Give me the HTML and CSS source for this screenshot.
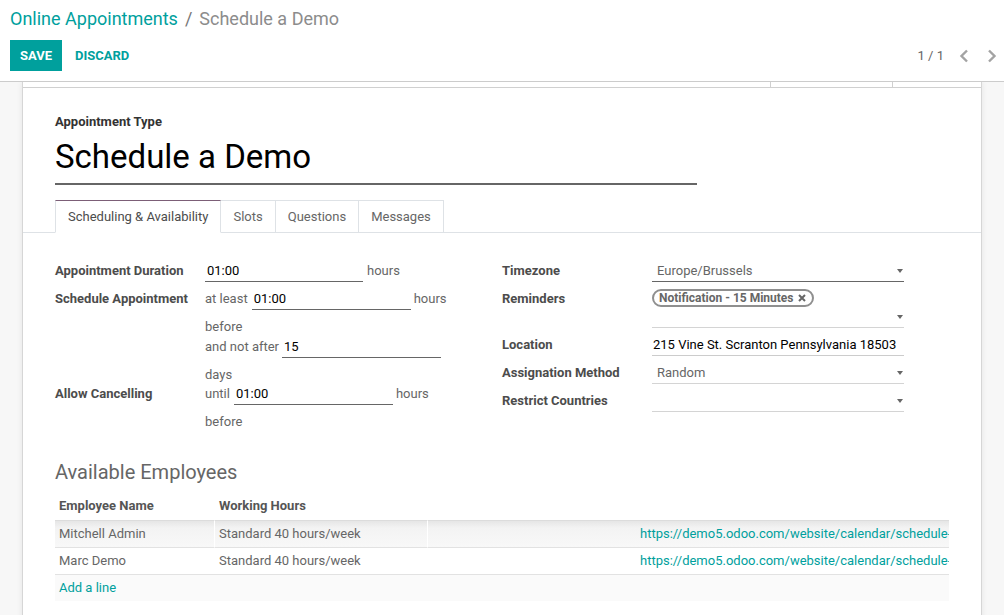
FILE: index.html
```html
<!DOCTYPE html>
<html lang="en">
<head>
<meta charset="utf-8">
<title>Schedule a Demo</title>
<link rel="stylesheet" href="styles.css">
</head>
<body>
<header class="cp">
  <div class="breadcrumb">
    <a class="bc-link">Online Appointments</a><span class="bc-sep">/</span><span class="bc-active">Schedule a Demo</span>
  </div>
  <div class="cp-bottom">
    <div class="cp-buttons">
      <button class="btn btn-save">Save</button>
      <button class="btn btn-discard">Discard</button>
    </div>
    <div class="pager">
      <span class="pager-value">1 / 1</span>
      <button class="pager-btn" aria-label="Previous">
        <svg width="10" height="14" viewBox="0 0 10 14"><path d="M8 1.5 L2.5 7 L8 12.5" fill="none" stroke="#a3a3a3" stroke-width="2.4"/></svg>
      </button>
      <button class="pager-btn" aria-label="Next">
        <svg width="10" height="14" viewBox="0 0 10 14"><path d="M2 1.5 L7.5 7 L2 12.5" fill="none" stroke="#a3a3a3" stroke-width="2.4"/></svg>
      </button>
    </div>
  </div>
</header>

<main class="content">
  <div class="sheet">
    <div class="button-box">
      <div class="bb-btn"></div>
      <div class="bb-btn bb-last"></div>
    </div>
    <div class="sheet-body">
      <div class="title">
        <div class="title-label">Appointment Type</div>
        <div class="title-input">Schedule a Demo</div>
      </div>

      <div class="notebook">
        <ul class="tabs">
          <li class="tab active">Scheduling &amp; Availability</li>
          <li class="tab">Slots</li>
          <li class="tab">Questions</li>
          <li class="tab">Messages</li>
        </ul>

        <div class="tab-pane">
          <div class="groups">
            <div class="group">
              <div class="lbl">Appointment Duration</div>
              <div class="val">
                <div class="line"><span class="inp dark w158">01:00</span><span class="txt ml4">hours</span></div>
              </div>

              <div class="lbl">Schedule Appointment</div>
              <div class="val">
                <div class="line"><span class="txt">at least</span><span class="inp dark ml4 w159">01:00</span><span class="txt ml3">hours</span></div>
                <div class="tline">before</div>
                <div class="line"><span class="txt">and not after</span><span class="inp dark ml3 w159">15</span></div>
                <div class="tline">days</div>
              </div>

              <div class="lbl">Allow Cancelling</div>
              <div class="val">
                <div class="line"><span class="txt">until</span><span class="inp dark ml4 w159">01:00</span><span class="txt ml3">hours</span></div>
                <div class="tline">before</div>
              </div>
            </div>

            <div class="group">
              <div class="lbl">Timezone</div>
              <div class="val">
                <div class="line"><span class="sel dark">Europe/Brussels<i class="caret"></i></span></div>
              </div>

              <div class="lbl">Reminders</div>
              <div class="val">
                <div class="tag-line">
                  <span class="tag">Notification - 15 Minutes
                    <svg class="tag-x" width="8" height="8" viewBox="0 0 8 8"><path d="M1 1 L7 7 M7 1 L1 7" stroke="#666" stroke-width="2" fill="none"/></svg>
                  </span>
                </div>
                <div class="line"><span class="sel"><i class="caret"></i></span></div>
              </div>

              <div class="lbl">Location</div>
              <div class="val">
                <div class="line"><span class="inp light w252">215 Vine St. Scranton Pennsylvania 18503</span></div>
              </div>

              <div class="lbl">Assignation Method</div>
              <div class="val">
                <div class="line"><span class="sel">Random<i class="caret"></i></span></div>
              </div>

              <div class="lbl">Restrict Countries</div>
              <div class="val">
                <div class="line"><span class="sel"><i class="caret"></i></span></div>
              </div>
            </div>
          </div>

          <h3 class="sep-title">Available Employees</h3>

          <table class="list">
            <colgroup>
              <col class="c-name">
              <col class="c-hours">
              <col class="c-blank">
              <col class="c-url">
            </colgroup>
            <thead>
              <tr>
                <th class="sep">Employee Name</th>
                <th class="sep">Working Hours</th>
                <th></th>
                <th></th>
              </tr>
            </thead>
            <tbody>
              <tr class="first">
                <td class="sep">Mitchell Admin</td>
                <td class="sep">Standard 40 hours/week</td>
                <td></td>
                <td class="url">https://demo5.odoo.com/website/calendar/schedule-a-demo-1?employee_id=1</td>
              </tr>
              <tr>
                <td>Marc Demo</td>
                <td>Standard 40 hours/week</td>
                <td></td>
                <td class="url">https://demo5.odoo.com/website/calendar/schedule-a-demo-1?employee_id=7</td>
              </tr>
              <tr class="add-row">
                <td colspan="4"><a class="add-line">Add a line</a></td>
              </tr>
            </tbody>
          </table>
        </div>
      </div>
    </div>
  </div>
</main>
</body>
</html>
```

FILE: styles.css
```css
* {
  box-sizing: border-box;
}

html,
body {
  margin: 0;
  height: 100%;
}

body {
  font-family: Roboto, "Noto Sans", "Liberation Sans", sans-serif;
  font-size: 13px;
  color: #4c4c4c;
  background: #f7f7f7;
  overflow: hidden;
}

/* ---------- control panel ---------- */
.cp {
  background: #fff;
  border-bottom: 1px solid #cccccc;
  padding: 8px 0 10px 10px;
  height: 82px;
}

.breadcrumb {
  font-size: 18px;
  line-height: 22px;
  height: 22px;
  white-space: nowrap;
}

.bc-link {
  color: #00a09d;
}

.bc-sep {
  color: #777;
  margin: 0 7px;
}

.bc-active {
  color: #8c8c8c;
}

.cp-bottom {
  display: flex;
  justify-content: space-between;
  align-items: center;
  margin-top: 10px;
  height: 31px;
}

.cp-buttons {
  display: flex;
}

.btn {
  border: 0;
  font-family: inherit;
  font-weight: bold;
  font-size: 13px;
  height: 31px;
  padding: 0 10px;
  text-transform: uppercase;
  cursor: pointer;
}

.btn-save {
  background: #00a09d;
  color: #fff;
}

.btn-discard {
  background: none;
  color: #00a09d;
  margin-left: 3px;
}

.pager {
  display: flex;
  align-items: center;
  margin-right: -2px;
}

.pager-value {
  color: #666;
  margin-right: 6px;
}

.pager-btn {
  width: 28px;
  height: 31px;
  display: flex;
  align-items: center;
  justify-content: center;
  background: none;
  border: 0;
  padding: 0;
}

/* ---------- content / sheet ---------- */
.content {
  height: calc(100% - 82px);
  padding: 0 22px;
  overflow: hidden;
}

.sheet {
  background: #fff;
  border-left: 1px solid #d6d6d6;
  border-right: 1px solid #d6d6d6;
  min-height: 110%;
  box-shadow: 0 0 6px rgba(0, 0, 0, 0.08);
}

.button-box {
  display: flex;
  justify-content: flex-end;
  height: 6px;
  border-bottom: 1px solid #d0d0d0;
}

.bb-btn {
  border-left: 1px solid #d0d0d0;
  width: 122px;
}

.bb-btn.bb-last {
  width: 89px;
}

.sheet-body {
  padding: 25px 32px 0;
}

.title-label {
  font-weight: bold;
  line-height: 18px;
  color: #333;
}

.title-input {
  margin-top: 3px;
  width: 642px;
  font-size: 33px;
  line-height: 40px;
  padding: 3px 0 6px;
  border-bottom: 2px solid #666;
  color: #000;
}

/* ---------- notebook ---------- */
.tabs {
  display: flex;
  list-style: none;
  margin: 15px -32px 0;
  padding: 0 0 0 32px;
  border-bottom: 1px solid #dee2e6;
}

.tab {
  border: 1px solid #dee2e6;
  padding: 7px 12px 6px;
  line-height: 18px;
  margin-right: -1px;
  margin-bottom: -1px;
  color: #666;
  background: #fff;
}

.tab.active {
  border-top-color: #7c5e77;
  border-bottom-color: #fff;
  color: #4c4c4c;
  position: relative;
  z-index: 1;
}

.tab-pane {
  padding-top: 28px;
}

.groups {
  display: flex;
}

.group {
  flex: 1 1 0;
  display: grid;
  grid-template-columns: 150px 1fr;
  align-content: start;
}

.lbl {
  font-weight: bold;
  line-height: 19px;
  color: #4c4c4c;
}

.val {
  display: flex;
  flex-direction: column;
}

.line {
  display: flex;
  align-items: flex-start;
  height: 28px;
}

.tline {
  height: 19.5px;
  line-height: 19.5px;
  color: #666;
}

.txt {
  line-height: 19px;
  color: #666;
  white-space: nowrap;
}

.ml3 {
  margin-left: 3px;
}

.ml4 {
  margin-left: 4px;
}

.inp {
  height: 21px;
  line-height: 19px;
  padding: 0 1px;
  color: #000;
  border-bottom: 1px solid #ccc;
  white-space: nowrap;
}

.inp.dark {
  border-bottom-color: #666;
  padding-left: 2px;
}

.w158 {
  width: 158px;
}

.w159 {
  width: 159px;
}

.w252 {
  width: 252px;
}

.sel {
  position: relative;
  display: block;
  width: 252px;
  height: 21px;
  line-height: 19px;
  padding-left: 5px;
  color: #666;
  border-bottom: 1px solid #d4d4d4;
}

.sel.dark {
  border-bottom-color: #666;
}

.caret {
  position: absolute;
  right: 1px;
  top: 8px;
  width: 0;
  height: 0;
  border-left: 3px solid transparent;
  border-right: 3px solid transparent;
  border-top: 4px solid #666;
}

.tag-line {
  height: 18px;
  display: flex;
}

.tag {
  display: inline-flex;
  align-items: center;
  height: 18px;
  padding: 0 6px 0 5px;
  border: 2px solid #8f8f8f;
  border-radius: 9px;
  font-size: 12px;
  font-weight: bold;
  color: #666;
  white-space: nowrap;
}

.tag-x {
  margin-left: 5px;
}

/* ---------- one2many list ---------- */
.sep-title {
  margin: 28px 0 10px;
  font-size: 20px;
  line-height: 24px;
  font-weight: normal;
  color: #666;
}

.list {
  width: 100%;
  table-layout: fixed;
  border-collapse: separate;
  border-spacing: 0;
}

.c-name {
  width: 160px;
}

.c-hours {
  width: 213px;
}

.c-blank {
  width: 208px;
}

.list th {
  text-align: left;
  font-weight: bold;
  color: #555;
  padding: 3px 4px 5px;
  line-height: 18px;
  border-bottom: 1px solid #dcdcdc;
}

.list td {
  padding: 4px;
  line-height: 18px;
  color: #666;
  border-bottom: 1px solid #e2e2e2;
  white-space: nowrap;
  overflow: hidden;
}

.list .sep {
  border-right: 1px solid #fff;
}

.list tr.first td {
  background: linear-gradient(#e6e6e6, #f3f3f3 7px, #f8f8f8);
}

.list td.url {
  color: #00a09d;
  text-overflow: clip;
}

.list tr.add-row td {
  background: #fafafa;
  border-bottom: 0;
}

.add-line {
  color: #00a09d;
}
```
